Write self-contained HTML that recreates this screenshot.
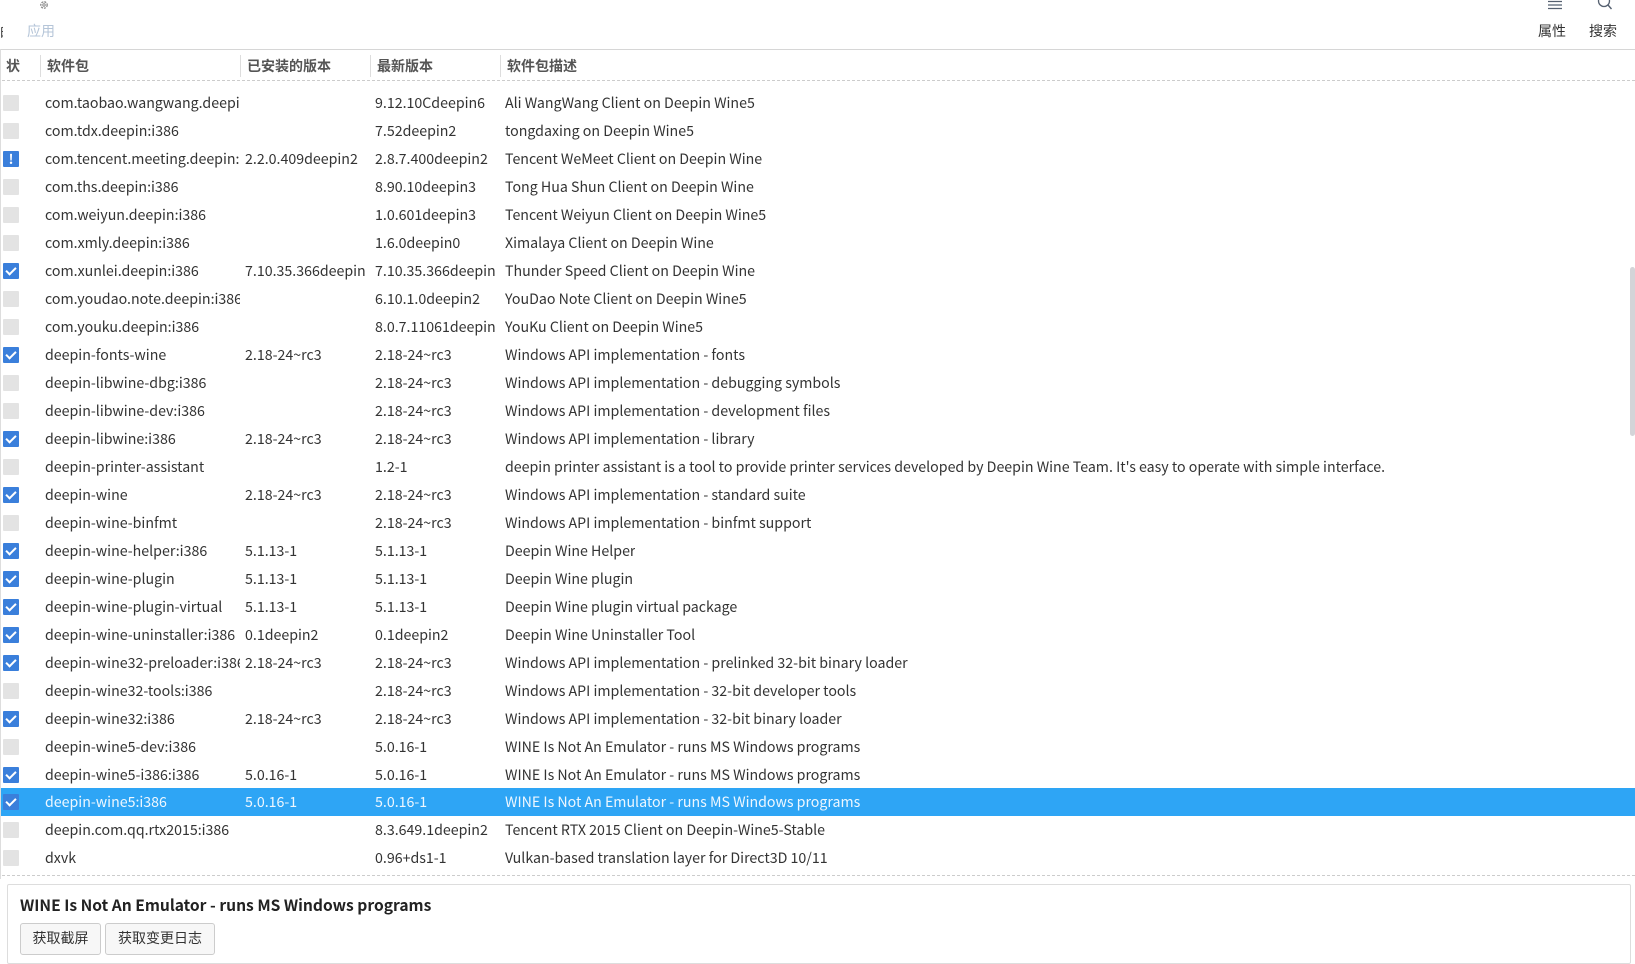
<!DOCTYPE html>
<html><head><meta charset="utf-8"><style>
*{margin:0;padding:0;box-sizing:border-box}
body{width:1635px;height:945px;overflow:hidden;background:#fff;font-family:"Noto Sans CJK SC","Liberation Sans",sans-serif;color:#333;position:relative}
.a{position:absolute;white-space:nowrap}
.row{position:absolute;left:1px;width:1634px;height:28px;font-size:14.2px;line-height:28px;white-space:nowrap}
.row span{position:absolute;top:0;overflow:hidden;white-space:nowrap}
.c1{left:44px;width:195px}.c2{left:244px;width:125px}.c3{left:374px;width:125px}.c4{left:504px}
.cb{position:absolute;left:2px;top:6px;width:16px;height:16px;background:#e3e3e3;border-radius:1px}
.cb.on{background:#3a7fdb}
.cb.on:after{content:"";position:absolute;left:5px;top:2px;width:4px;height:8px;border:solid #fff;border-width:0 2px 2px 0;transform:rotate(45deg)}
.cb.ex{background:#3a7fdb;color:#fff;font-weight:bold;font-size:13px;line-height:16px;text-align:center;font-style:normal}
.sel{background:#2ea5f5;color:#eef7ff}
.hd{position:absolute;top:56px;font-size:14px;font-weight:bold;color:#555;line-height:20px}
.sep{position:absolute;top:55px;width:1px;height:22px;background:#ddd}
.btn{position:absolute;top:923px;height:32px;border:1px solid #ccc;border-radius:3px;background:#f7f7f7;font-size:14px;line-height:28px;text-align:center;color:#333}
</style></head><body>
<svg class="a" style="left:38px;top:0" width="12" height="12" viewBox="0 0 12 12"><circle cx="6" cy="5" r="3.2" fill="none" stroke="#888" stroke-width="1.3" stroke-dasharray="2 1"/><circle cx="6" cy="5" r="1.2" fill="none" stroke="#888"/></svg>
<div class="a" style="left:0;top:22px;font-size:14px;color:#333;width:3px;overflow:hidden">的</div>
<div class="a" style="left:27px;top:21px;font-size:14px;color:#b5c5d8;line-height:20px">应用</div>
<svg class="a" style="left:1547px;top:0" width="16" height="10"><path d="M1 1.5h14M1 5h14M1 8.5h14" stroke="#556070" stroke-width="1.3"/></svg>
<svg class="a" style="left:1596px;top:0" width="20" height="12"><circle cx="8" cy="1" r="5.5" fill="none" stroke="#556070" stroke-width="1.3"/><path d="M12 5l3.5 4" stroke="#556070" stroke-width="1.4"/></svg>
<div class="a" style="left:1538px;top:21px;font-size:14px;line-height:20px">属性</div>
<div class="a" style="left:1589px;top:21px;font-size:14px;line-height:20px">搜索</div>
<div class="a" style="left:0;top:49px;width:1635px;height:1px;background:#d6d6d6"></div>
<div class="a" style="left:0;top:49px;width:1px;height:830px;background:#ddd"></div>
<div class="hd" style="left:6px">状</div><div class="sep" style="left:40px"></div>
<div class="hd" style="left:47px">软件包</div><div class="sep" style="left:240px"></div>
<div class="hd" style="left:247px">已安装的版本</div><div class="sep" style="left:370px"></div>
<div class="hd" style="left:377px">最新版本</div><div class="sep" style="left:500px"></div>
<div class="hd" style="left:507px">软件包描述</div>
<div class="a" style="left:2px;top:80px;width:1633px;border-top:1px dashed #ccc"></div>
<div class="a" style="left:2px;top:875px;width:1633px;border-top:1px dashed #ccc"></div>
<div class="a" style="left:1630px;top:267px;width:5px;height:169px;background:#d4d4d8;border-radius:3px"></div>

<div class="row" style="top:89px"><i class="cb"></i><span class="c1">com.taobao.wangwang.deepin:i386</span><span class="c3">9.12.10Cdeepin6</span><span class="c4">Ali WangWang Client on Deepin Wine5</span></div>
<div class="row" style="top:117px"><i class="cb"></i><span class="c1">com.tdx.deepin:i386</span><span class="c3">7.52deepin2</span><span class="c4">tongdaxing on Deepin Wine5</span></div>
<div class="row" style="top:145px"><i class="cb ex">!</i><span class="c1">com.tencent.meeting.deepin:i386</span><span class="c2">2.2.0.409deepin2</span><span class="c3">2.8.7.400deepin2</span><span class="c4">Tencent WeMeet Client on Deepin Wine</span></div>
<div class="row" style="top:173px"><i class="cb"></i><span class="c1">com.ths.deepin:i386</span><span class="c3">8.90.10deepin3</span><span class="c4">Tong Hua Shun Client on Deepin Wine</span></div>
<div class="row" style="top:201px"><i class="cb"></i><span class="c1">com.weiyun.deepin:i386</span><span class="c3">1.0.601deepin3</span><span class="c4">Tencent Weiyun Client on Deepin Wine5</span></div>
<div class="row" style="top:229px"><i class="cb"></i><span class="c1">com.xmly.deepin:i386</span><span class="c3">1.6.0deepin0</span><span class="c4">Ximalaya Client on Deepin Wine</span></div>
<div class="row" style="top:257px"><i class="cb on"></i><span class="c1">com.xunlei.deepin:i386</span><span class="c2">7.10.35.366deepin</span><span class="c3">7.10.35.366deepin</span><span class="c4">Thunder Speed Client on Deepin Wine</span></div>
<div class="row" style="top:285px"><i class="cb"></i><span class="c1">com.youdao.note.deepin:i386</span><span class="c3">6.10.1.0deepin2</span><span class="c4">YouDao Note Client on Deepin Wine5</span></div>
<div class="row" style="top:313px"><i class="cb"></i><span class="c1">com.youku.deepin:i386</span><span class="c3">8.0.7.11061deepin</span><span class="c4">YouKu Client on Deepin Wine5</span></div>
<div class="row" style="top:341px"><i class="cb on"></i><span class="c1">deepin-fonts-wine</span><span class="c2">2.18-24~rc3</span><span class="c3">2.18-24~rc3</span><span class="c4">Windows API implementation - fonts</span></div>
<div class="row" style="top:369px"><i class="cb"></i><span class="c1">deepin-libwine-dbg:i386</span><span class="c3">2.18-24~rc3</span><span class="c4">Windows API implementation - debugging symbols</span></div>
<div class="row" style="top:397px"><i class="cb"></i><span class="c1">deepin-libwine-dev:i386</span><span class="c3">2.18-24~rc3</span><span class="c4">Windows API implementation - development files</span></div>
<div class="row" style="top:425px"><i class="cb on"></i><span class="c1">deepin-libwine:i386</span><span class="c2">2.18-24~rc3</span><span class="c3">2.18-24~rc3</span><span class="c4">Windows API implementation - library</span></div>
<div class="row" style="top:453px"><i class="cb"></i><span class="c1">deepin-printer-assistant</span><span class="c3">1.2-1</span><span class="c4">deepin printer assistant is a tool to provide printer services developed by Deepin Wine Team. It's easy to operate with simple interface.</span></div>
<div class="row" style="top:481px"><i class="cb on"></i><span class="c1">deepin-wine</span><span class="c2">2.18-24~rc3</span><span class="c3">2.18-24~rc3</span><span class="c4">Windows API implementation - standard suite</span></div>
<div class="row" style="top:509px"><i class="cb"></i><span class="c1">deepin-wine-binfmt</span><span class="c3">2.18-24~rc3</span><span class="c4">Windows API implementation - binfmt support</span></div>
<div class="row" style="top:537px"><i class="cb on"></i><span class="c1">deepin-wine-helper:i386</span><span class="c2">5.1.13-1</span><span class="c3">5.1.13-1</span><span class="c4">Deepin Wine Helper</span></div>
<div class="row" style="top:565px"><i class="cb on"></i><span class="c1">deepin-wine-plugin</span><span class="c2">5.1.13-1</span><span class="c3">5.1.13-1</span><span class="c4">Deepin Wine plugin</span></div>
<div class="row" style="top:593px"><i class="cb on"></i><span class="c1">deepin-wine-plugin-virtual</span><span class="c2">5.1.13-1</span><span class="c3">5.1.13-1</span><span class="c4">Deepin Wine plugin virtual package</span></div>
<div class="row" style="top:621px"><i class="cb on"></i><span class="c1">deepin-wine-uninstaller:i386</span><span class="c2">0.1deepin2</span><span class="c3">0.1deepin2</span><span class="c4">Deepin Wine Uninstaller Tool</span></div>
<div class="row" style="top:649px"><i class="cb on"></i><span class="c1">deepin-wine32-preloader:i386</span><span class="c2">2.18-24~rc3</span><span class="c3">2.18-24~rc3</span><span class="c4">Windows API implementation - prelinked 32-bit binary loader</span></div>
<div class="row" style="top:677px"><i class="cb"></i><span class="c1">deepin-wine32-tools:i386</span><span class="c3">2.18-24~rc3</span><span class="c4">Windows API implementation - 32-bit developer tools</span></div>
<div class="row" style="top:705px"><i class="cb on"></i><span class="c1">deepin-wine32:i386</span><span class="c2">2.18-24~rc3</span><span class="c3">2.18-24~rc3</span><span class="c4">Windows API implementation - 32-bit binary loader</span></div>
<div class="row" style="top:733px"><i class="cb"></i><span class="c1">deepin-wine5-dev:i386</span><span class="c3">5.0.16-1</span><span class="c4">WINE Is Not An Emulator - runs MS Windows programs</span></div>
<div class="row" style="top:761px"><i class="cb on"></i><span class="c1">deepin-wine5-i386:i386</span><span class="c2">5.0.16-1</span><span class="c3">5.0.16-1</span><span class="c4">WINE Is Not An Emulator - runs MS Windows programs</span></div>
<div class="row sel" style="top:788px"><i class="cb on"></i><span class="c1">deepin-wine5:i386</span><span class="c2">5.0.16-1</span><span class="c3">5.0.16-1</span><span class="c4">WINE Is Not An Emulator - runs MS Windows programs</span></div>
<div class="row" style="top:816px"><i class="cb"></i><span class="c1">deepin.com.qq.rtx2015:i386</span><span class="c3">8.3.649.1deepin2</span><span class="c4">Tencent RTX 2015 Client on Deepin-Wine5-Stable</span></div>
<div class="row" style="top:844px"><i class="cb"></i><span class="c1">dxvk</span><span class="c3">0.96+ds1-1</span><span class="c4">Vulkan-based translation layer for Direct3D 10/11</span></div>

<div class="a" style="left:7px;top:884px;width:1624px;height:80px;border:1px solid #ddd;border-radius:2px"></div>
<div class="a" style="left:20px;top:893px;font-size:15.6px;font-weight:bold;color:#222;line-height:24px">WINE Is Not An Emulator - runs MS Windows programs</div>
<div class="btn" style="left:20px;width:81px">获取截屏</div>
<div class="btn" style="left:105px;width:110px">获取变更日志</div>
</body></html>
